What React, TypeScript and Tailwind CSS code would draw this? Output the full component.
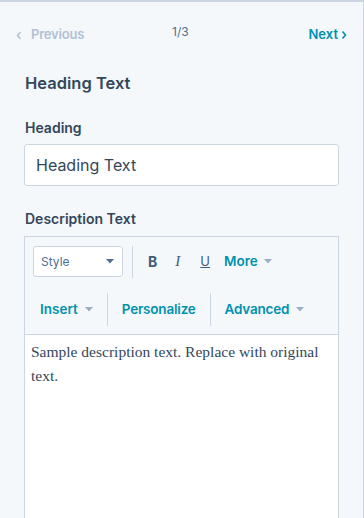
import React from "react";

const Caret = ({ className = "" }: { className?: string }) => (
  <svg width="8" height="5" viewBox="0 0 8 5" className={className}>
    <path d="M0 0 L8 0 L4 4.5 Z" fill="currentColor" />
  </svg>
);

export default function App() {
  return (
    <div className="w-[364px] h-[518px] overflow-hidden bg-[#f5f8fa] border-t-2 border-r border-[#cbd6e2] font-['Inter',sans-serif] text-[#33475b]">
      {/* nav */}
      <div className="flex items-center justify-between pl-[16px] pr-[16px] pt-[22px] h-[44px]">
        <div className="flex items-center gap-[9px] text-[#b0c1d4] text-[13px] font-semibold">
          <svg width="6" height="9" viewBox="0 0 6 9">
            <path d="M4.5 1 L1.5 4.5 L4.5 8" stroke="currentColor" strokeWidth="1.4" fill="none" />
          </svg>
          <span className="tracking-[-0.2px]">Previous</span>
        </div>
        <div className="text-[12px] text-[#516f90] -mt-[6px] mr-[32px]">1/3</div>
        <div className="flex items-center gap-[3px] text-[#0091ae] text-[13px] font-semibold">
          <span>Next</span>
          <svg width="6" height="10" viewBox="0 0 6 10">
            <path d="M1.5 1.5 L4.5 5 L1.5 8.5" stroke="currentColor" strokeWidth="1.6" fill="none" />
          </svg>
        </div>
      </div>

      <div className="px-[24px]">
        <div className="mt-[25px] text-[16.5px] leading-[24px] font-semibold pl-px">Heading Text</div>

        <div className="mt-[23px] text-[14px] leading-[20px] font-semibold pl-px">Heading</div>
        <div className="mt-[6px] h-[42px] w-[315px] bg-white border border-[#cbd6e2] rounded-[3px] flex items-center px-[11px] text-[16px]">
          Heading Text
        </div>

        <div className="mt-[23px] text-[14px] leading-[20px] font-semibold pl-px">Description Text</div>

        <div className="mt-[7px] w-[315px] border border-[#cbd6e2] h-[300px] flex flex-col">
          <div className="bg-[#f5f8fa] border-b border-[#cbd6e2] px-[8px]">
            <div className="flex items-center pt-[8px] h-[41px]">
              <div className="w-[90px] h-[31px] bg-white border border-[#cbd6e2] rounded-[3px] flex items-center justify-between pl-[7px] pr-[8px] text-[12px] text-[#516f90]">
                <span>Style</span>
                <Caret className="text-[#516f90]" />
              </div>
              <div className="w-px h-[32px] bg-[#cbd6e2] ml-[9px]" />
              <span className="ml-[15px] text-[14px] font-bold text-[#425b76]">B</span>
              <span className="ml-[18px] text-[15px] italic font-['Liberation_Serif',serif] text-[#425b76]">I</span>
              <span className="ml-[20px] text-[13px] underline text-[#425b76]">U</span>
              <span className="ml-[14px] text-[13.5px] font-semibold text-[#0091ae]">More</span>
              <Caret className="ml-[6px] text-[#99afc4]" />
            </div>
            <div className="flex items-center mt-[15px] h-[33px] mb-[8px]">
              <span className="ml-[7px] text-[13.5px] font-semibold text-[#0091ae]">Insert</span>
              <Caret className="ml-[7px] text-[#99afc4]" />
              <div className="w-px h-[33px] bg-[#cbd6e2] ml-[14px]" />
              <span className="ml-[14px] text-[13.5px] font-semibold text-[#0091ae] tracking-[-0.2px]">Personalize</span>
              <div className="w-px h-[33px] bg-[#cbd6e2] ml-[14px]" />
              <span className="ml-[14px] text-[13.5px] font-semibold text-[#0091ae] tracking-[-0.2px]">Advanced</span>
              <Caret className="ml-[7px] text-[#99afc4]" />
            </div>
          </div>
          <div className="flex-1 bg-white px-[6px] pt-[5px] font-['Liberation_Serif',serif] text-[15.5px] leading-[24px] text-[#33475b]">
            Sample description text. Replace with original text.
          </div>
        </div>
      </div>
    </div>
  );
}
